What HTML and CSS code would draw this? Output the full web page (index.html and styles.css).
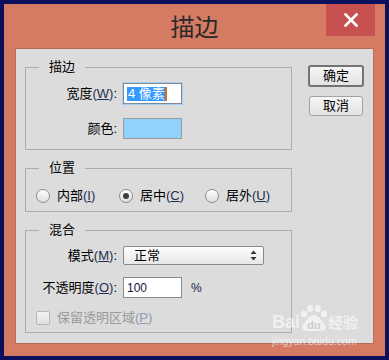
FILE: index.html
```html
<!DOCTYPE html>
<html lang="zh-CN">
<head>
<meta charset="utf-8">
<title>描边</title>
<link rel="stylesheet" href="styles.css">
</head>
<body>
<div class="screen">
  <div class="window">
    <div class="titlebar">
      <div class="spacer"></div>
      <div class="title">描边</div>
      <div class="close">
        <svg width="14" height="14" viewBox="0 0 14 14"><path d="M1.5 1.5 L12.5 12.5 M12.5 1.5 L1.5 12.5" stroke="#fff" stroke-width="2.6" stroke-linecap="square"/></svg>
      </div>
    </div>
    <div class="client">
      <div class="groups">
        <fieldset class="group g-stroke">
          <legend>描边</legend>
          <div class="row r-first">
            <span class="lbl">宽度<span class="mn">(<u>W</u>)</span>:</span>
            <div class="input focus"><span class="sel">4 像素</span></div>
          </div>
          <div class="row r-second">
            <span class="lbl">颜色:</span>
            <div class="swatch"></div>
          </div>
        </fieldset>
        <fieldset class="group g-pos">
          <legend>位置</legend>
          <div class="radios">
            <div class="radio-item w1"><span class="radio"></span><span>内部<span class="mn">(<u>I</u>)</span></span></div>
            <div class="radio-item w2"><span class="radio on"></span><span>居中<span class="mn">(<u>C</u>)</span></span></div>
            <div class="radio-item"><span class="radio"></span><span>居外<span class="mn">(<u>U</u>)</span></span></div>
          </div>
        </fieldset>
        <fieldset class="group g-mix">
          <legend>混合</legend>
          <div class="row r-mode">
            <span class="lbl">模式<span class="mn">(<u>M</u>)</span>:</span>
            <div class="select">
              <span>正常</span>
              <svg width="7" height="11" viewBox="0 0 7 11"><path d="M3.5 0.5 L6.5 4 L0.5 4 Z M0.5 7 L6.5 7 L3.5 10.5 Z" fill="#333"/></svg>
            </div>
          </div>
          <div class="row r-opacity">
            <span class="lbl">不透明度<span class="mn">(<u>O</u>)</span>:</span>
            <div class="input plain"><span class="num">100</span></div>
            <span class="pct">%</span>
          </div>
          <div class="check-row">
            <span class="checkbox"></span>
            <span>保留透明区域<span class="mn-dis">(<u>P</u>)</span></span>
          </div>
        </fieldset>
      </div>
      <div class="buttons">
        <div class="btn default">确定</div>
        <div class="btn cancel">取消</div>
      </div>
    </div>
  </div>
  <div class="watermark">
    <div class="wm-top">
      <span class="wm-bai">Bai</span>
      <svg class="wm-paw" width="30" height="28" viewBox="0 0 30 28">
        <ellipse cx="5" cy="10" rx="3" ry="3.6" fill="rgba(255,255,255,0.6)"/>
        <ellipse cx="11" cy="4.5" rx="3" ry="3.6" fill="rgba(255,255,255,0.6)"/>
        <ellipse cx="19" cy="4.5" rx="3" ry="3.6" fill="rgba(255,255,255,0.6)"/>
        <ellipse cx="25" cy="10" rx="3" ry="3.6" fill="rgba(255,255,255,0.6)"/>
        <path d="M15 11 C10 11 7 17 4 21 C2 24 4 27 8 27 L22 27 C26 27 28 24 26 21 C23 17 20 11 15 11 Z" fill="rgba(255,255,255,0.6)"/>
        <text x="15" y="25" text-anchor="middle" font-family="Liberation Sans, sans-serif" font-weight="bold" font-size="11" fill="rgba(200,200,200,0.9)">du</text>
      </svg>
      <span class="wm-jy">经验</span>
    </div>
    <div class="wm-url">jingyan.baidu.com</div>
  </div>
</div>
</body>
</html>
```

FILE: styles.css
```css
body {
  margin: 0;
}

.screen {
  position: relative;
  width: 389px;
  height: 360px;
  box-sizing: border-box;
  padding: 4px;
  background: #0b105c;
  font-family: "Liberation Sans", "Noto Sans CJK SC", sans-serif;
  font-size: 13px;
  line-height: 16px;
  color: #000;
}

.window {
  height: 352px;
  background: #d57a63;
  display: flex;
  flex-direction: column;
}

.titlebar {
  height: 44px;
  flex: none;
  display: grid;
  grid-template-columns: 1fr auto 1fr;
}

.title {
  align-self: center;
  font-family: "Noto Sans CJK SC", sans-serif;
  font-size: 24px;
  line-height: 30px;
  color: #2b2b2b;
}

.close {
  justify-self: end;
  width: 49px;
  height: 32px;
  margin-right: 10px;
  background: #c75050;
  display: flex;
  align-items: center;
  justify-content: center;
}

.close svg {
  margin-top: -1px;
}

.client {
  flex: 1;
  margin: 0 11px 12px;
  background: #dcdcdc;
  border: 1px solid #b86c59;
  display: flex;
  align-items: flex-start;
  padding: 10px 0 0 9px;
}

.groups {
  width: 267px;
  display: flex;
  flex-direction: column;
  gap: 10px;
}

.group {
  margin: 0;
  padding: 0 0 7px;
  border: 1px solid #acacac;
  min-width: 0;
  box-sizing: border-box;
}

.group legend {
  margin-left: 13px;
  padding: 0 10px;
  line-height: 16px;
}

.g-stroke {
  padding-bottom: 10px;
}

.g-mix {
  padding-bottom: 6px;
}

.row {
  display: flex;
  align-items: center;
}

.r-first {
  margin-top: 8px;
}

.r-second {
  margin-top: 14px;
}

.r-mode {
  margin-top: 8px;
}

.r-opacity {
  margin-top: 12px;
}

.lbl {
  width: 91px;
  margin-right: 6px;
  text-align: right;
  white-space: nowrap;
}

.mn {
  color: #1e2f52;
}

.mn-dis {
  color: #8f9bb0;
}

.input {
  width: 59px;
  height: 21px;
  box-sizing: border-box;
  background: #fff;
  border: 1px solid #8b8b8b;
  padding-left: 3px;
  display: flex;
  align-items: center;
}

.input.focus {
  border-color: #7f8a96;
  box-shadow: 0 0 0 1px #a9cdef;
}

.sel {
  background: #3399ff;
  color: #fff;
  height: 14px;
  line-height: 14px;
  padding-left: 1px;
  border-right: 2px solid #e06a10;
  white-space: nowrap;
}

.num {
  font-size: 12px;
  color: #1a1040;
}

.swatch {
  width: 59px;
  height: 21px;
  box-sizing: border-box;
  background: #8fd3fc;
  border: 1px solid #9b9b9b;
}

.radios {
  display: flex;
  align-items: center;
  margin-top: 12px;
  padding-left: 10px;
  height: 16px;
}

.radio-item {
  display: flex;
  align-items: center;
  gap: 7px;
  white-space: nowrap;
}

.radio-item.w1 {
  width: 83px;
}

.radio-item.w2 {
  width: 86px;
}

.radio {
  width: 14px;
  height: 14px;
  box-sizing: border-box;
  border-radius: 50%;
  border: 1px solid #8c8c8c;
  background: linear-gradient(#ffffff, #dedede);
  display: flex;
  align-items: center;
  justify-content: center;
}

.radio.on::after {
  content: "";
  width: 6px;
  height: 6px;
  border-radius: 50%;
  background: #3d3d3d;
}

.select {
  width: 141px;
  height: 19px;
  box-sizing: border-box;
  border: 1px solid #8a8a8a;
  border-radius: 2px;
  background: linear-gradient(#fdfdfd, #e8e8e8);
  display: flex;
  align-items: center;
  justify-content: space-between;
  padding: 0 6px 0 10px;
}

.pct {
  margin-left: 9px;
  font-size: 12px;
  color: #1b2540;
}

.check-row {
  display: flex;
  align-items: center;
  gap: 7px;
  margin-top: 12px;
  padding-left: 10px;
  height: 16px;
  color: #9a9a9a;
}

.checkbox {
  width: 14px;
  height: 14px;
  box-sizing: border-box;
  border: 1px solid #b6b6b6;
  border-radius: 2px;
  background: linear-gradient(#f2f2f2, #e0e0e0);
}

.buttons {
  margin-left: 16px;
  padding-top: 6px;
  display: flex;
  flex-direction: column;
}

.btn {
  width: 56px;
  height: 22px;
  box-sizing: border-box;
  display: flex;
  align-items: center;
  justify-content: center;
  background: linear-gradient(#f6f6f6, #e3e3e3);
  border-radius: 3px;
}

.btn.default {
  border: 2px solid #737373;
}

.btn.cancel {
  width: 54px;
  height: 20px;
  margin: 9px 0 0 1px;
  border: 1px solid #a3a3a3;
}

.watermark {
  position: absolute;
  left: 272px;
  top: 304px;
  color: rgba(255, 255, 255, 0.6);
  font-family: "Liberation Sans", "Noto Sans CJK SC", sans-serif;
}

.wm-top {
  display: flex;
  align-items: flex-end;
  height: 28px;
}

.wm-bai {
  font-size: 18px;
  font-weight: bold;
  line-height: 20px;
}

.wm-paw {
  margin-left: -1px;
}

.wm-jy {
  font-family: "Noto Sans CJK SC", sans-serif;
  font-size: 15px;
  font-weight: bold;
  line-height: 20px;
  margin-left: -1px;
}

.wm-url {
  font-size: 10.5px;
  line-height: 12px;
  margin-top: 3px;
}
```
